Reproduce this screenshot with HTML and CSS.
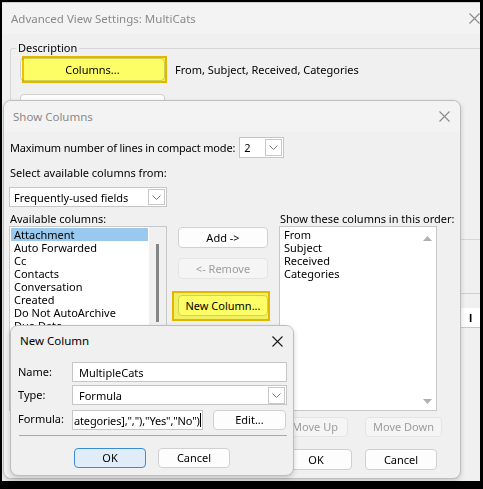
FILE: index.html
```html
<!DOCTYPE html>
<html lang="en">

<head>
    <meta charset="UTF-8">
    <meta name="viewport" content="width=device-width, initial-scale=1.0">
    <title>Advanced View Settings</title>
    <link rel="stylesheet" href="styles.css">
</head>

<body>
    <div class="desk">

        <!-- back window: Advanced View Settings -->
        <section class="win main-win">
            <header class="titlebar">
                <span class="title dim">Advanced View Settings: MultiCats</span>
                <svg class="x-icon x-dim" width="11" height="11" viewBox="0 0 11 11"><path d="M0.5 0.5 L10.5 10.5 M10.5 0.5 L0.5 10.5" /></svg>
            </header>
            <div class="main-body">
                <fieldset class="group">
                    <legend>Description</legend>
                    <div class="desc-row">
                        <span class="hl hl-cols"><button class="btn btn-desc">Columns...</button></span>
                        <span class="desc-text">From, Subject, Received, Categories</span>
                    </div>
                    <div class="desc-row">
                        <button class="btn btn-desc"></button>
                    </div>
                </fieldset>
                <div class="more">
                    <div class="more-field">l</div>
                </div>
            </div>
        </section>

        <!-- middle window: Show Columns -->
        <section class="win dlg show-cols">
            <header class="titlebar">
                <span class="title dim">Show Columns</span>
                <svg class="x-icon x-dim" width="11" height="11" viewBox="0 0 11 11"><path d="M0.5 0.5 L10.5 10.5 M10.5 0.5 L0.5 10.5" /></svg>
            </header>
            <div class="sc-body">
                <div class="row-max">
                    <span class="tight">Maximum number of lines in compact mode:</span>
                    <div class="select sel-lines">
                        <span>2</span>
                        <span class="arrow"><svg width="9" height="5" viewBox="0 0 9 5"><path d="M0.5 0.5 L4.5 4.5 L8.5 0.5" /></svg></span>
                    </div>
                </div>
                <div class="label lbl-from">Select available columns from:</div>
                <div class="select sel-fields">
                    <span>Frequently-used fields</span>
                    <span class="arrow"><svg width="9" height="5" viewBox="0 0 9 5"><path d="M0.5 0.5 L4.5 4.5 L8.5 0.5" /></svg></span>
                </div>

                <div class="cols">
                    <div class="label">Available columns:</div>
                    <div></div>
                    <div class="label">Show these columns in this order:</div>

                    <div class="list">
                        <ul class="items">
                            <li class="sel">Attachment</li>
                            <li>Auto Forwarded</li>
                            <li>Cc</li>
                            <li>Contacts</li>
                            <li>Conversation</li>
                            <li>Created</li>
                            <li>Do Not AutoArchive</li>
                            <li>Due Date</li>
                            <li>Flag Status</li>
                        </ul>
                        <div class="vscroll"><span class="thumb"></span></div>
                    </div>

                    <div class="mid">
                        <button class="btn btn-mid">Add -&gt;</button>
                        <button class="btn btn-mid" disabled>&lt;- Remove</button>
                        <span class="hl hl-new"><button class="btn btn-mid">New Column...</button></span>
                    </div>

                    <div class="list">
                        <ul class="items">
                            <li>From</li>
                            <li>Subject</li>
                            <li>Received</li>
                            <li>Categories</li>
                        </ul>
                        <div class="vscroll arrows">
                            <svg width="9" height="5" viewBox="0 0 9 5"><path class="tri" d="M0 5 L4.5 0 L9 5 Z" /></svg>
                            <svg width="9" height="5" viewBox="0 0 9 5"><path class="tri" d="M0 0 L4.5 5 L9 0 Z" /></svg>
                        </div>
                    </div>
                </div>

                <div class="row-move">
                    <button class="btn btn-move btn-up" disabled>Move Up</button>
                    <button class="btn btn-move" disabled>Move Down</button>
                </div>
                <div class="row-ok">
                    <button class="btn btn-ok">OK</button>
                    <button class="btn btn-ok">Cancel</button>
                </div>
            </div>
        </section>

        <!-- front window: New Column -->
        <section class="win dlg new-col">
            <header class="titlebar">
                <span class="title">New Column</span>
                <svg class="x-icon" width="11" height="11" viewBox="0 0 11 11"><path d="M0.5 0.5 L10.5 10.5 M10.5 0.5 L0.5 10.5" /></svg>
            </header>
            <div class="nc-body">
                <div class="nc-form">
                    <label>Name:</label>
                    <div class="input">MultipleCats</div>
                    <label>Type:</label>
                    <div class="select sel-type">
                        <span>Formula</span>
                        <span class="arrow"><svg width="9" height="5" viewBox="0 0 9 5"><path d="M0.5 0.5 L4.5 4.5 L8.5 0.5" /></svg></span>
                    </div>
                    <label>Formula:</label>
                    <div class="formula-row">
                        <div class="input formula">ategories],","),"Yes","No")<span class="caret"></span></div>
                        <button class="btn btn-edit">Edit...</button>
                    </div>
                </div>
                <hr class="sep">
                <div class="nc-buttons">
                    <button class="btn btn-nc btn-default">OK</button>
                    <button class="btn btn-nc">Cancel</button>
                </div>
            </div>
        </section>

    </div>
</body>

</html>
```

FILE: styles.css
```css
* {
    padding: 0;
    margin: 0;
    box-sizing: border-box;
}

body {
    background: #000;
    font-family: "Noto Sans", "Segoe UI", sans-serif;
    font-size: 11px;
    color: #000;
    overflow: hidden;
}

.desk {
    position: relative;
    width: 483px;
    height: 489px;
}

/* windows */
.win {
    position: absolute;
    background: #f0f0f0;
    overflow: hidden;
}

.main-win {
    left: 2px;
    top: 2px;
    width: 478px;
    height: 479px;
    border-top: 1px solid #cfcfcf;
}

.dlg {
    border: 1px solid #bdbdbd;
    border-radius: 8px;
    box-shadow: 0 2px 5px rgba(0, 0, 0, .18);
}

.show-cols {
    left: 3px;
    top: 100px;
    width: 458px;
    height: 379px;
}

.new-col {
    left: 10px;
    top: 325px;
    width: 284px;
    height: 151px;
}

.titlebar {
    display: flex;
    align-items: center;
    justify-content: space-between;
    background: #f3f3f3;
    padding: 0 10px 0 9px;
}

.title {
    line-height: 16px;
    font-size: 11.5px;
}

.dim {
    color: #8a8a8a;
}

.x-icon path {
    stroke: #1a1a1a;
    stroke-width: 1.1;
    fill: none;
}

.x-icon.x-dim path {
    stroke: #8a8a8a;
}

.main-win .titlebar {
    height: 31px;
    padding-right: 0;
}

.show-cols .titlebar {
    height: 31px;
}

.new-col .titlebar {
    height: 30px;
    padding-left: 9px;
    background: #f0f0f0;
}

/* controls */
.btn {
    font: inherit;
    color: #000;
    background: #fdfdfd;
    border: 1px solid #d0d0d0;
    border-radius: 4px;
    height: 21px;
    line-height: 18px;
}

.btn:disabled {
    color: #9c9c9c;
    background: #f5f5f5;
    border-color: #e4e4e4;
}

.select,
.input {
    display: flex;
    align-items: center;
    background: #fff;
    border: 1px solid #c6c6c6;
    height: 21px;
    padding-left: 4px;
    white-space: nowrap;
    overflow: hidden;
}

.select {
    justify-content: space-between;
    padding-right: 1px;
}

.arrow {
    display: flex;
    align-items: center;
    justify-content: center;
    width: 17px;
    height: 17px;
    border: 1px solid #c8c8c8;
    background: #fff;
}

.arrow path {
    stroke: #7a7a7a;
    fill: none;
}

/* yellow marker drawn over a button */
.hl {
    position: relative;
    display: inline-flex;
}

.hl::after {
    content: "";
    position: absolute;
    background: #ffff66;
    border: 2px solid #f2c200;
    mix-blend-mode: multiply;
    pointer-events: none;
}

.hl-cols::after {
    left: 2px;
    top: -2px;
    right: -2px;
    bottom: -2px;
}

.hl-new::after {
    left: -6px;
    top: -4px;
    right: -2px;
    bottom: -5px;
}

/* back window body */
.main-body {
    padding: 6px 0 0 8px;
}

.group {
    border: 1px solid #d6d6d6;
    border-right: none;
    border-radius: 3px 0 0 3px;
    height: 200px;
    padding: 2px 0 0 9px;
}

.group legend {
    margin-left: -4px;
    padding: 0 2px;
    line-height: 16px;
}

.desc-row {
    display: flex;
    align-items: center;
    gap: 10px;
    margin-bottom: 13px;
}

.btn-desc {
    width: 145px;
    height: 23px;
}

.more {
    border-top: 1px solid #cfcfcf;
    margin-top: 53px;
    padding: 14px 0 0 450px;
}

.more-field {
    background: #fff;
    border-bottom: 1px solid #c8c8c8;
    height: 20px;
    line-height: 20px;
    font-weight: bold;
    padding-left: 9px;
}

/* Show Columns body */
.sc-body {
    padding: 5px 0 0 5px;
}

.row-max {
    display: flex;
    align-items: center;
    gap: 4px;
    padding-left: 1px;
}

.tight {
    letter-spacing: -0.17px;
}

.sel-lines {
    width: 45px;
}

.label {
    line-height: 14px;
    padding-left: 1px;
}

.lbl-from {
    margin: 8px 0 7px;
}

.sel-fields {
    width: 158px;
    height: 20px;
}

.sel-fields .arrow {
    height: 16px;
}

.cols {
    display: grid;
    grid-template-columns: 158px 90px 158px;
    grid-template-rows: 19px 185px;
    column-gap: 11px;
    align-items: end;
}

.cols .label {
    align-self: start;
    padding-top: 5px;
    white-space: nowrap;
}

.list {
    display: flex;
    height: 185px;
    background: #fff;
    border: 1px solid #c8c8c8;
    overflow: hidden;
}

.items {
    list-style: none;
    flex: 1;
    padding: 1px 1px 0 1px;
}

.items li {
    line-height: 13px;
    padding-left: 3px;
    white-space: nowrap;
}

.items li.sel {
    background: #99c9ef;
}

.vscroll {
    width: 17px;
    background: #f0f0f0;
    display: flex;
    justify-content: center;
    padding-top: 17px;
}

.thumb {
    width: 3px;
    height: 78px;
    background: #858585;
}

.vscroll.arrows {
    flex-direction: column;
    align-items: center;
    justify-content: space-between;
    padding: 9px 0 6px;
    background: #fff;
}

.tri {
    fill: #b0b0b0;
}

.mid {
    align-self: start;
    display: flex;
    flex-direction: column;
    gap: 10px;
    padding-top: 1px;
}

.btn-mid {
    width: 90px;
}

.mid .hl {
    margin-top: 6px;
}

.row-move,
.row-ok {
    display: flex;
    justify-content: flex-end;
}

.row-move {
    gap: 17px;
    padding-right: 18px;
    margin-top: 6px;
}

.btn-move {
    width: 77px;
    height: 20px;
}

.btn-up {
    width: 66px;
}

.row-ok {
    gap: 13px;
    padding-right: 23px;
    margin-top: 12px;
}

.btn-ok {
    width: 72px;
}

/* New Column body */
.nc-body {
    padding: 6px 6px 0 7px;
}

.nc-form {
    display: grid;
    grid-template-columns: 54px 215px;
    row-gap: 3px;
    align-items: center;
}

.nc-form label {
    line-height: 14px;
}

.nc-form .input,
.nc-form .select {
    height: 20px;
    padding-left: 6px;
}

.nc-form .sel-type .arrow {
    height: 17px;
}

.formula-row {
    display: flex;
    gap: 10px;
    margin-top: 2px;
}

.formula {
    width: 131px;
    padding-left: 1px !important;
    letter-spacing: -0.15px;
}

.caret {
    width: 1px;
    height: 14px;
    background: #000;
}

.btn-edit {
    width: 73px;
    height: 20px;
}

.sep {
    border: none;
    border-top: 1px solid #a8a8a8;
    margin: 5px 0 0 1px;
    width: 268px;
}

.nc-buttons {
    display: flex;
    gap: 12px;
    padding: 12px 0 0 56px;
}

.btn-nc {
    width: 72px;
    height: 20px;
}

.btn-default {
    background: #e0edf9;
    border-color: #3c8bd8;
}
```
